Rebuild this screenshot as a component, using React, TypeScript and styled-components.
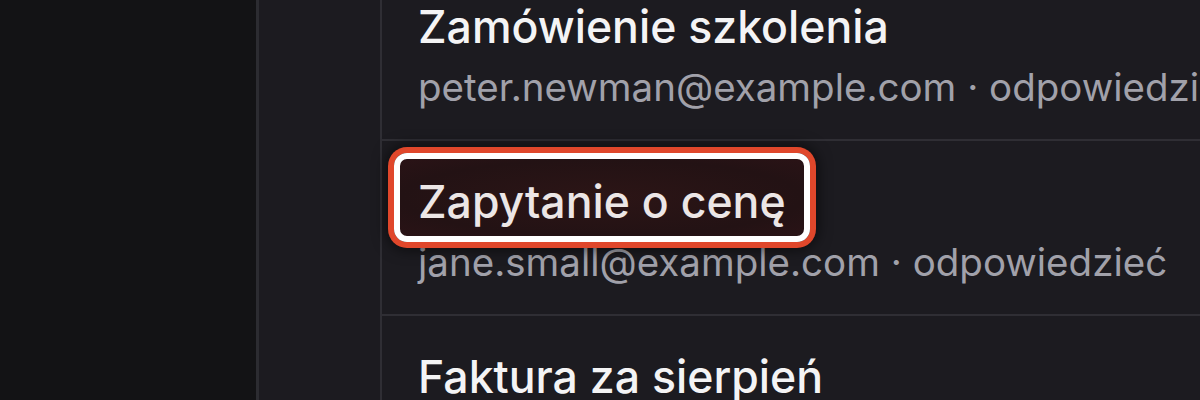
import styled, { createGlobalStyle } from "styled-components";

const GlobalStyle = createGlobalStyle`
  html, body {
    margin: 0;
    padding: 0;
    background: #131315;
    overflow: hidden;
  }
  body {
    font-family: Inter, "Noto Sans", sans-serif;
  }
`;

const Layout = styled.div`
  display: flex;
  width: 1200px;
  height: 400px;
  overflow: hidden;
`;

const Sidebar = styled.aside`
  width: 256px;
  flex-shrink: 0;
  background: #131315;
  border-right: 3px solid #2c2c31;
`;

const Rail = styled.div`
  width: 121px;
  flex-shrink: 0;
  background: #1c1b20;
  border-right: 2px solid #2f2e34;
`;

const List = styled.ul`
  flex: 1;
  min-width: 0;
  list-style: none;
  margin: -34px 0 0;
  padding: 0;
  background: #1c1b20;
`;

const Row = styled.li`
  display: flex;
  flex-direction: column;
  gap: 11px;
  padding: 35px 0 29px 36px;
  border-bottom: 2px solid #2f2e34;
  white-space: nowrap;
`;

const Title = styled.div<{ $marked?: boolean }>`
  position: relative;
  z-index: 0;
  align-self: flex-start;
  font-size: 44.6px;
  line-height: 52px;
  font-weight: 500;
  color: ${({ $marked }) => ($marked ? "#ece6e6" : "#f4f4f5")};
`;

const Ring = styled.span`
  position: absolute;
  z-index: -1;
  left: -24px;
  right: -24px;
  top: -23px;
  bottom: -14px;
  border: 6px solid #ffffff;
  border-radius: 13px;
  background: radial-gradient(ellipse at center, #2c1516 0%, #231214 70%, #2a1316 100%);
  box-shadow: 0 0 0 6px #e0472b, 0 0 14px 8px rgba(0, 0, 0, 0.55);
`;

const Meta = styled.div`
  font-size: 38.5px;
  line-height: 46px;
  color: #a1a1aa;
`;

const mails = [
  { title: "Zamówienie szkolenia", from: "peter.newman@example.com" },
  { title: "Zapytanie o cenę", from: "jane.small@example.com", marked: true },
  { title: "Faktura za sierpień", from: "anna.kowalska@example.com" },
];

export default function App() {
  return (
    <>
      <GlobalStyle />
      <Layout>
        <Sidebar />
        <Rail />
        <List>
          {mails.map((m) => (
            <Row key={m.title}>
              <Title $marked={m.marked}>
                {m.marked && <Ring />}
                {m.title}
              </Title>
              <Meta>{m.from} · odpowiedzieć</Meta>
            </Row>
          ))}
        </List>
      </Layout>
    </>
  );
}
